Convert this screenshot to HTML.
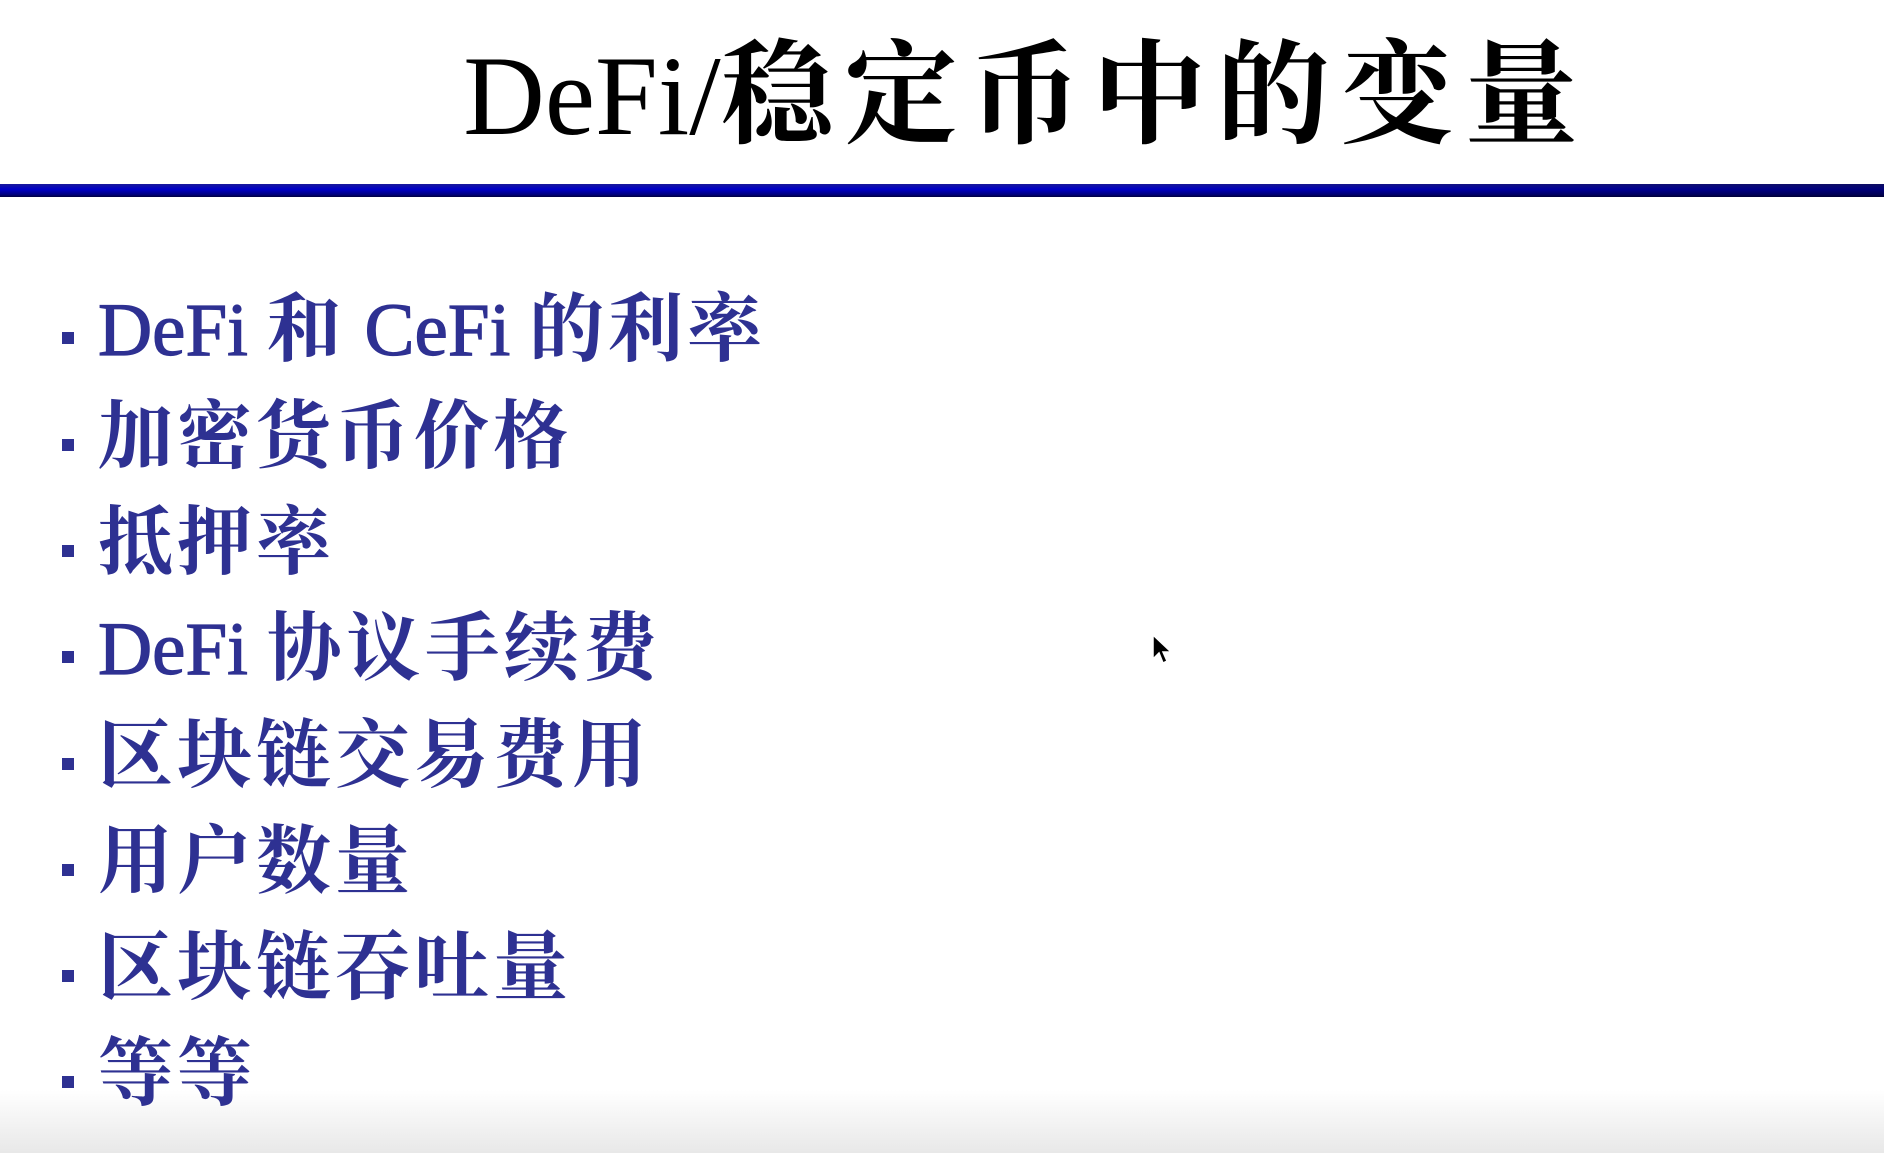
<!DOCTYPE html>
<html><head><meta charset="utf-8"><style>
html,body{margin:0;padding:0}
body{width:1884px;height:1153px;position:relative;overflow:hidden;background:linear-gradient(to bottom,#fff 0,#fff 1090px,#e8e8e8 1153px);font-family:"Liberation Serif","Noto Serif CJK SC",serif}
.title{position:absolute;left:0;width:1884px;top:22px;height:150px;line-height:150px;text-align:center;font-size:113px;color:#000;padding-left:168px;box-sizing:border-box;white-space:nowrap}
.title .c{letter-spacing:11px;font-weight:bold}
.bar{position:absolute;left:0;top:184px;width:1884px;height:13px;background:linear-gradient(to bottom,#1a1a9a,#0000c8 40%,#000080 80%,#000040);}
.bar:after{content:"";position:absolute;inset:0;background:linear-gradient(to right,rgba(0,0,0,0) 60%,rgba(0,0,40,.5))}
.item{position:absolute;left:98px;height:106px;line-height:106px;font-size:75px;color:#2e3192;white-space:nowrap;-webkit-text-stroke:1.2px #2e3192}
.item .c{letter-spacing:4px;font-weight:bold;-webkit-text-stroke:0}
.item:before{content:"";position:absolute;left:-36px;top:54px;width:12px;height:12px;background:#2e3192}
.cur{position:absolute;left:1152px;top:634px}
</style></head><body>
<div class="title">DeFi/<span class="c">稳定币中的变量</span></div>
<div class="bar"></div>
<div class="item" style="top:278px">DeFi <span class="c">和</span> CeFi <span class="c">的利率</span></div>
<div class="item" style="top:385px"><span class="c">加密货币价格</span></div>
<div class="item" style="top:491px"><span class="c">抵押率</span></div>
<div class="item" style="top:597px">DeFi <span class="c">协议手续费</span></div>
<div class="item" style="top:704px"><span class="c"> 区块链交易费用</span></div>
<div class="item" style="top:810px"><span class="c">用户数量</span></div>
<div class="item" style="top:916px"><span class="c"> 区块链吞吐量</span></div>
<div class="item" style="top:1022px"><span class="c">等等</span></div>
<svg class="cur" width="24" height="34" viewBox="0 0 24 34"><path d="M1 1 L1 25 L7 19 L11 29 L15 27 L11 18 L19 18 Z" fill="#000" stroke="#fff" stroke-width="1.5"/></svg>
</body></html>
